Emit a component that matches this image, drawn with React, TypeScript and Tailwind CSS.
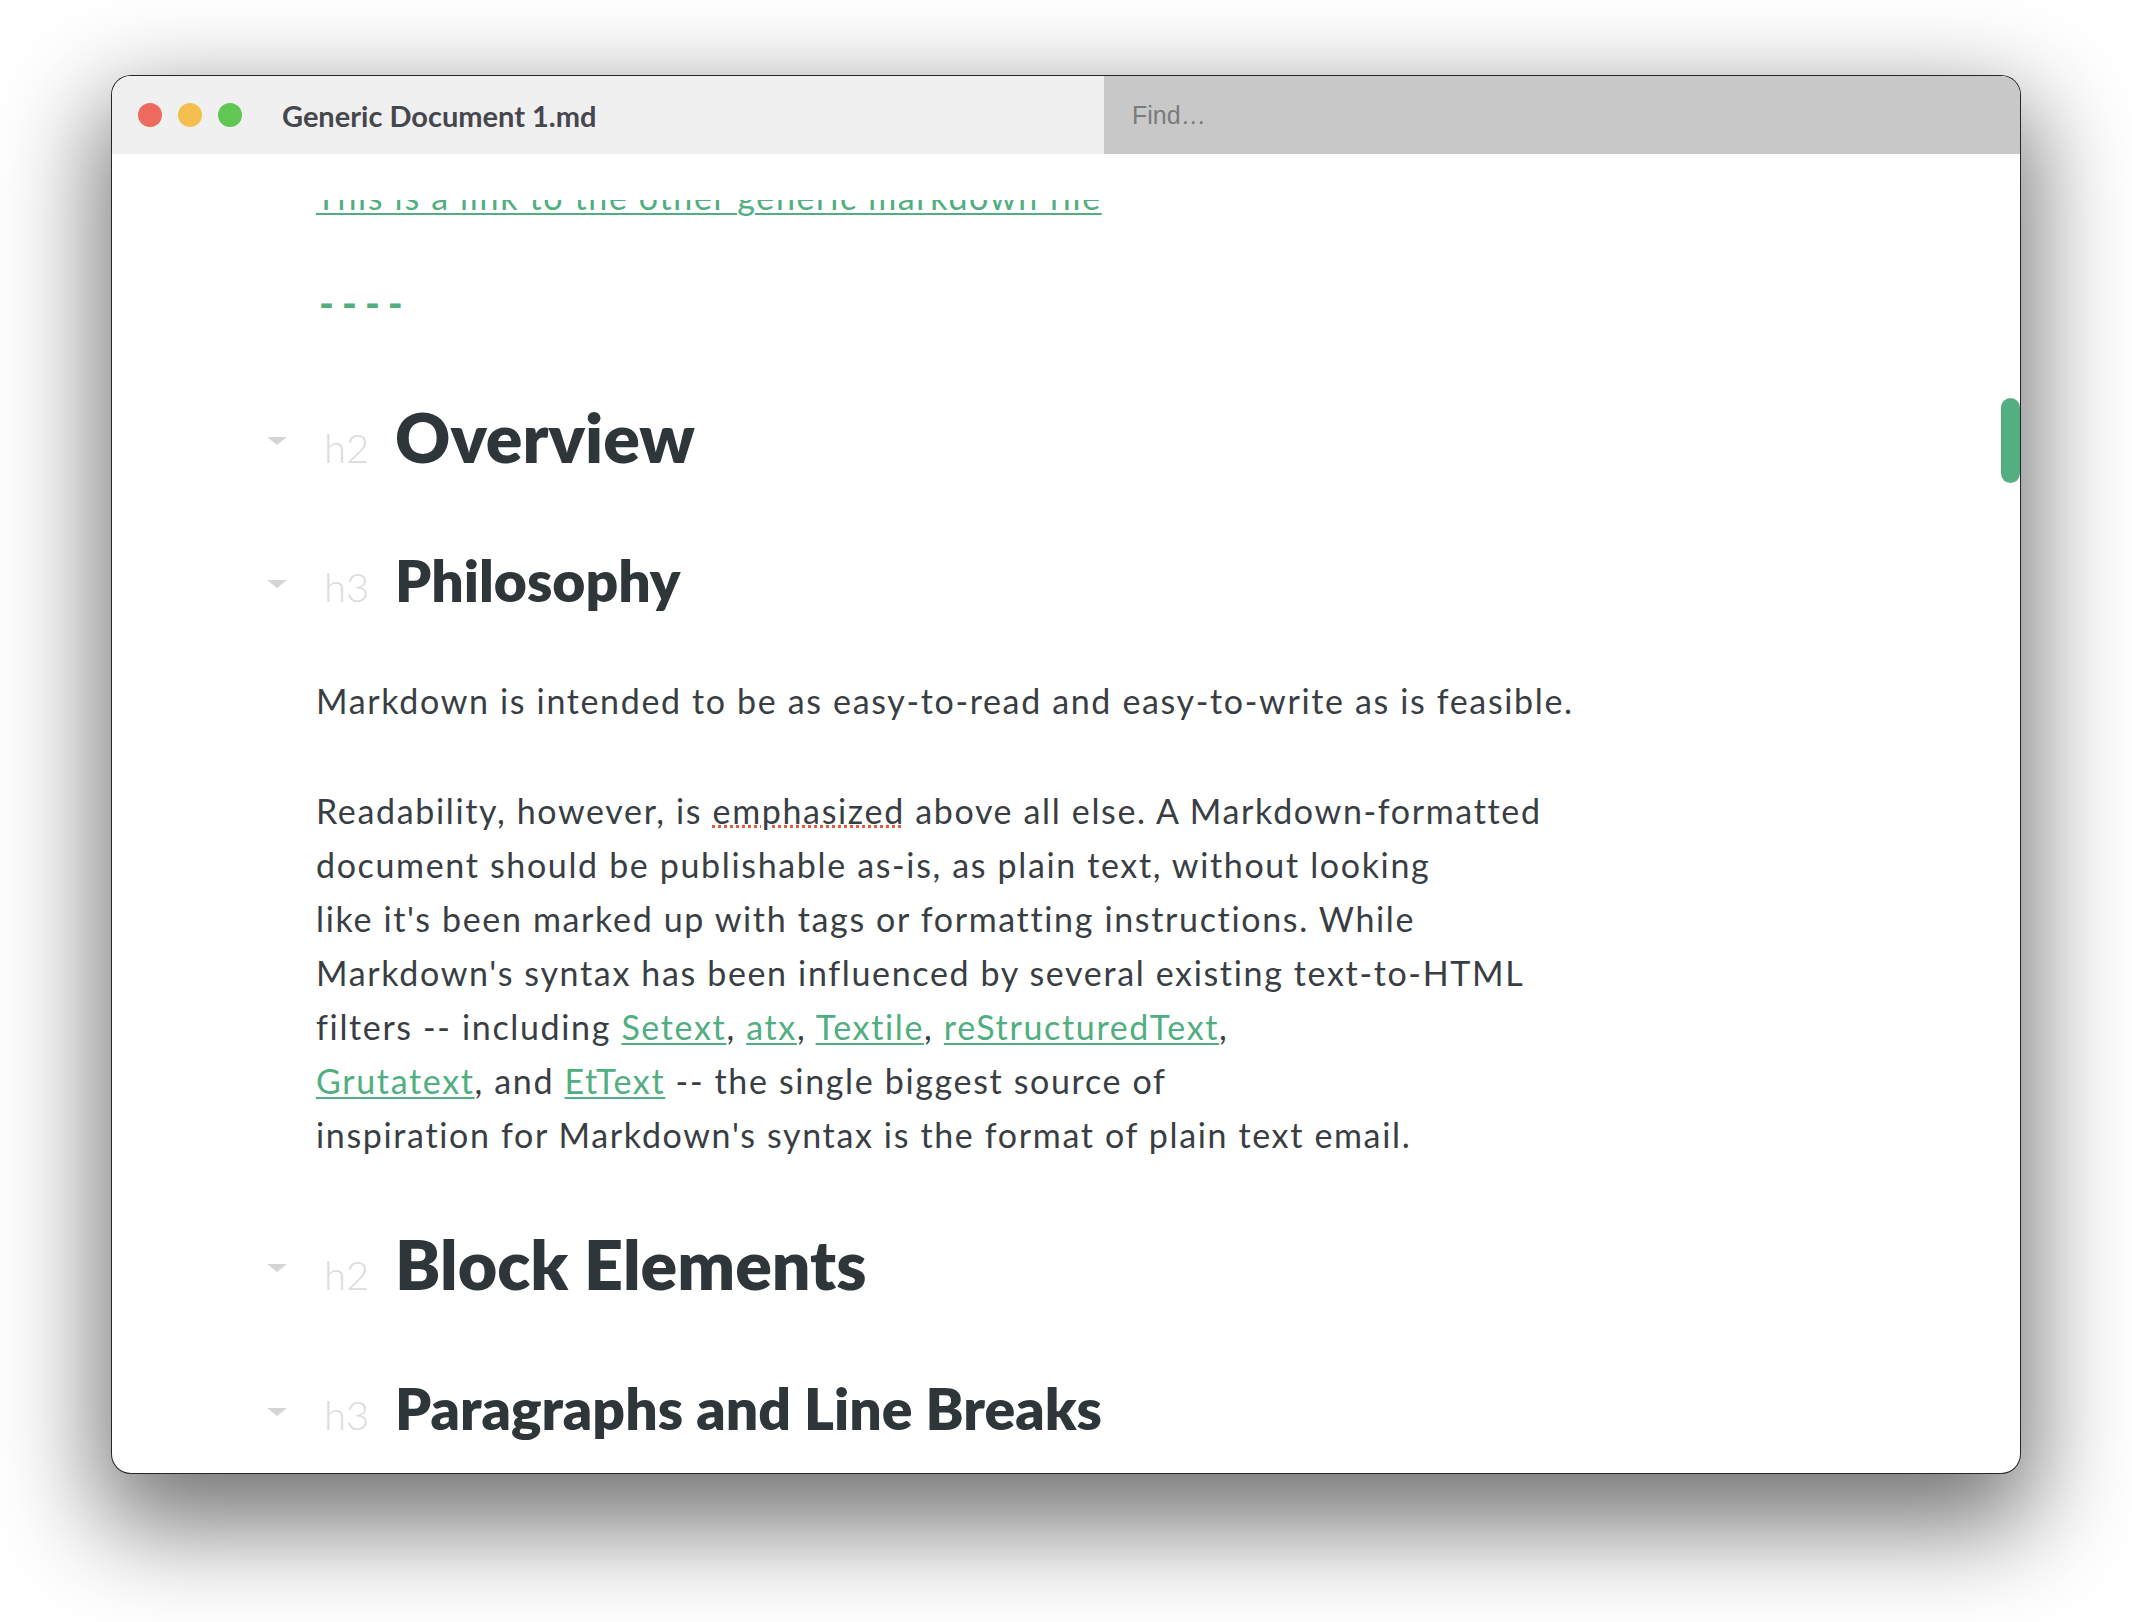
import React from "react";

const LINK =
  "text-[#50ae80] underline decoration-[2px] underline-offset-[3px] decoration-[#50ae80]";

function Tri({ h3 }: { h3?: boolean }) {
  return (
    <div className={"shrink-0 mr-[37px] " + (h3 ? "pb-[14px]" : "pb-[18px]")}>
      <svg viewBox="0 0 20 8" className="block w-[20px] h-[8px]">
        <path d="M0 0 L20 0 L10 8 Z" fill="#d5d5d5" />
      </svg>
    </div>
  );
}

function Heading({
  level,
  children,
  className,
}: {
  level: 2 | 3;
  children: React.ReactNode;
  className: string;
}) {
  return (
    <div className={"flex items-baseline -ml-[49px] tracking-normal " + className}>
      <Tri h3={level === 3} />
      <span className="w-[71px] shrink-0 text-[40px] leading-none font-light text-[#dcdcdc]">
        h{level}
      </span>
      {level === 2 ? (
        <h2 className="text-[68px] leading-[82px] font-extrabold text-[#2f363a] whitespace-nowrap">
          {children}
        </h2>
      ) : (
        <h3 className="text-[57px] leading-[70px] font-extrabold text-[#2f363a] whitespace-nowrap">
          {children}
        </h3>
      )}
    </div>
  );
}

export default function App() {
  return (
    <div className="w-[2132px] h-[1622px] bg-white pl-[111px] pt-[75px] font-['Lato',sans-serif]">
      <div className="w-[1910px] h-[1399px] rounded-[20px] border border-black/85 overflow-hidden flex flex-col bg-white shadow-[0_40px_100px_12px_rgba(0,0,0,0.55)]">
        {/* title bar */}
        <div className="h-[78px] flex shrink-0">
          <div className="w-[992px] bg-[#f0f0f0] flex items-center pl-[26px]">
            <div className="flex gap-[16px]">
              <span className="w-[24px] h-[24px] rounded-full bg-[#ee6a5f]" />
              <span className="w-[24px] h-[24px] rounded-full bg-[#f5bf4f]" />
              <span className="w-[24px] h-[24px] rounded-full bg-[#62c655]" />
            </div>
            <span className="ml-[40px] text-[29px] leading-none font-bold text-[#46464e]">
              Generic Document 1.md
            </span>
          </div>
          <div className="flex-1 bg-[#c8c8c8] flex items-center pl-[28px]">
            <span className="font-['Liberation_Sans',Arial,sans-serif] text-[25px] leading-none text-[#7b7b7b]">
              Find…
            </span>
          </div>
        </div>

        {/* content */}
        <div className="flex-1 relative pt-[46px] flex flex-col min-h-0">
          <div className="flex-1 overflow-hidden pl-[204px] text-[34px] leading-[54px] font-normal tracking-[1.65px] text-[#383e43]">
            <p className="-mt-[30px] whitespace-nowrap">
              <span className={LINK}>
                This is a link to the other generic markdown file
              </span>
            </p>
            <p className="mt-[52px] ml-[3px] text-[40px] leading-[54px] font-black text-[#50ae80] tracking-[8px]">
              ----
            </p>

            <Heading level={2} className="mt-[66px]">
              Overview
            </Heading>
            <Heading level={3} className="mt-[67px]">
              Philosophy
            </Heading>

            <p className="mt-[59px] whitespace-nowrap">
              Markdown is intended to be as easy-to-read and easy-to-write as is
              feasible.
            </p>

            <p className="mt-[56px] whitespace-nowrap">
              Readability, however, is{" "}
              <span className="underline decoration-dotted decoration-[3px] decoration-[#e25b3c] underline-offset-[1px]">
                emphasized
              </span>{" "}
              above all else. A Markdown-formatted
              <br />
              document should be publishable as-is, as plain text, without
              looking
              <br />
              like it's been marked up with tags or formatting instructions.
              While
              <br />
              Markdown's syntax has been influenced by several existing
              text-to-HTML
              <br />
              filters -- including <span className={LINK}>Setext</span>,{" "}
              <span className={LINK}>atx</span>,{" "}
              <span className={LINK}>Textile</span>,{" "}
              <span className={LINK}>reStructuredText</span>,
              <br />
              <span className={LINK}>Grutatext</span>, and{" "}
              <span className={LINK}>EtText</span> -- the single biggest source
              of
              <br />
              inspiration for Markdown's syntax is the format of plain text
              email.
            </p>

            <Heading level={2} className="mt-[61px]">
              Block Elements
            </Heading>
            <Heading level={3} className="mt-[68px]">
              Paragraphs and Line Breaks
            </Heading>
          </div>

          {/* scrollbar thumb */}
          <div className="absolute right-0 top-[244px] w-[19px] h-[85px] rounded-full bg-[#53af82]" />
        </div>
      </div>
    </div>
  );
}
